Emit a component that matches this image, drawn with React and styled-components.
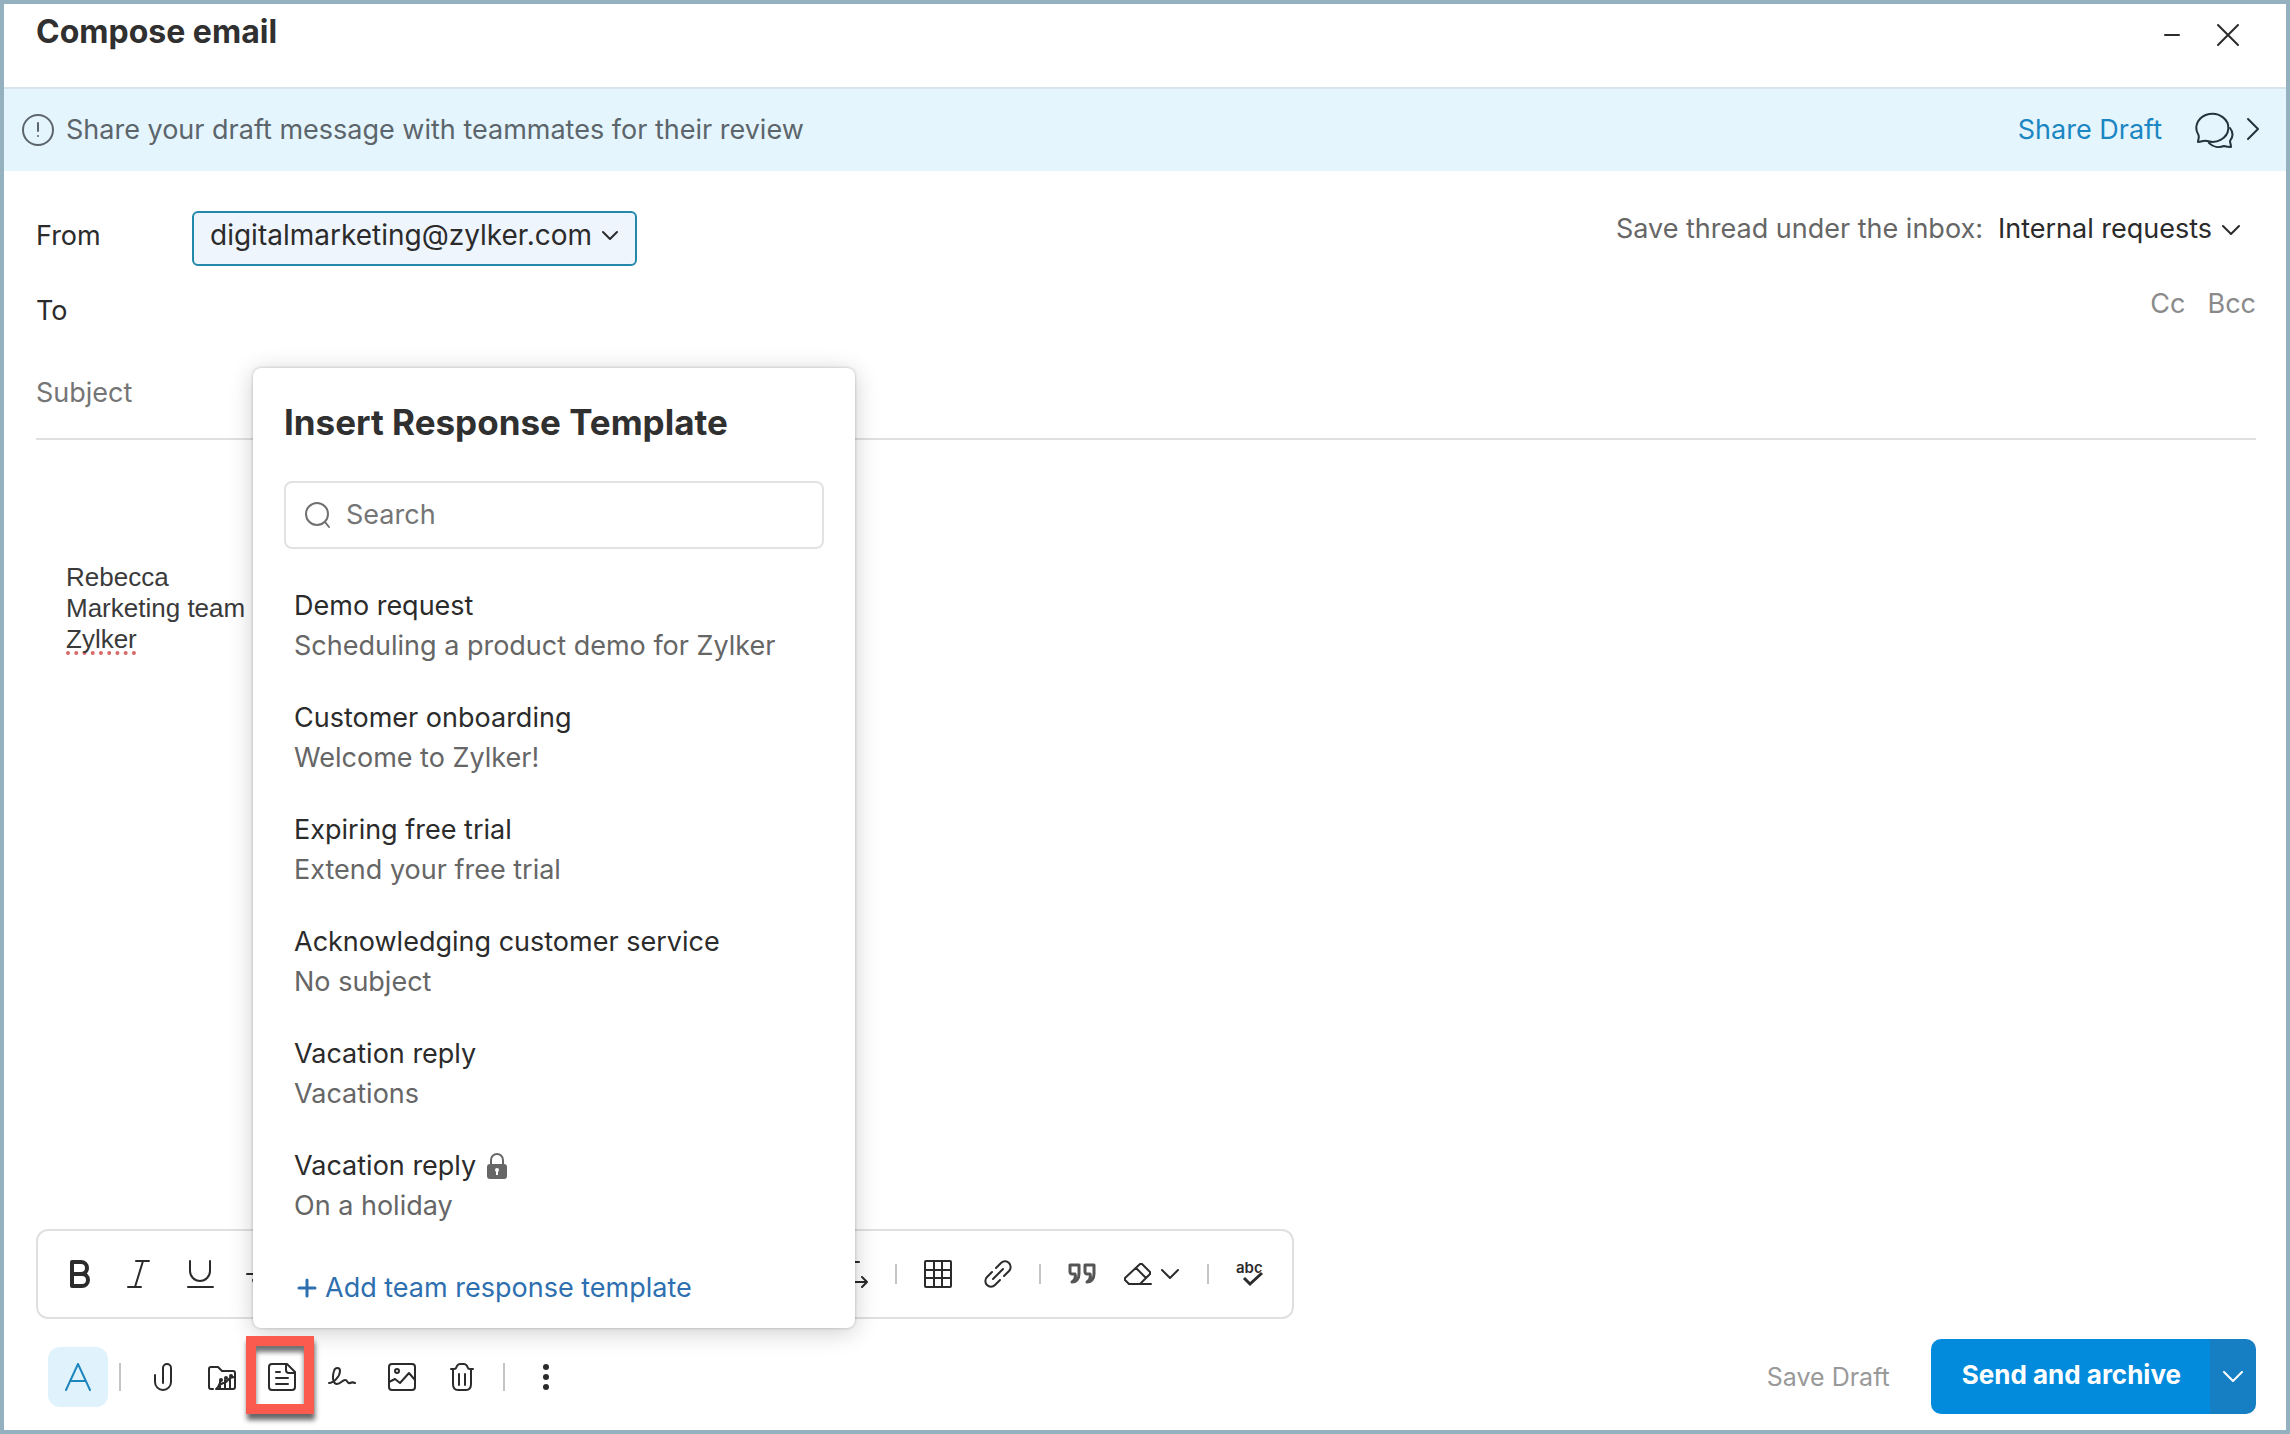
/**
 *
 * Compose email window
 *
 */

import React, { useState } from 'react';
import styled, { createGlobalStyle } from 'styled-components';

const GlobalStyle = createGlobalStyle`
  * {
    box-sizing: border-box;
  }
  body {
    margin: 0;
    background: #fff;
    color: #2b2b2b;
    font-family: Inter, "Liberation Sans", sans-serif;
    font-size: 27px;
    line-height: 36px;
  }
  button, input, select {
    margin: 0;
    padding: 0;
    border: 0;
    background: none;
    color: inherit;
    font: inherit;
  }
  button {
    cursor: pointer;
  }
  svg {
    display: block;
    flex: none;
  }
`;

const Window = styled.main`
  display: flex;
  flex-direction: column;
  min-height: 100vh;
  border: 4px solid #95b1bf;
`;

const Header = styled.header`
  display: flex;
  align-items: flex-start;
  justify-content: space-between;
  height: 85px;
  padding: 10px 44px 0 32px;
  border-bottom: 2px solid #d9e4ea;
`;

const Title = styled.h1`
  margin: 0;
  color: #303030;
  font-size: 32px;
  font-weight: 700;
  line-height: 36px;
`;

const WindowButtons = styled.div`
  display: flex;
  gap: 28px;
`;

const WindowButton = styled.button`
  display: flex;
  align-items: center;
  justify-content: center;
  width: 28px;
  height: 42px;
`;

const Banner = styled.section`
  display: flex;
  align-items: center;
  height: 82px;
  padding: 0 26px 0 18px;
  background: #e5f5fd;
  color: #5c656b;
`;

const BannerText = styled.p`
  flex: 1;
  margin: 0 12px;
`;

const ShareLink = styled.a`
  margin-right: 32px;
  color: #1a86c2;
  text-decoration: none;
`;

const ChatButton = styled.button`
  display: flex;
  align-items: center;
  gap: 12px;
  color: #23333b;
`;

const Form = styled.div`
  display: flex;
  flex-direction: column;
  padding: 40px 30px 0 32px;
`;

const FieldRow = styled.div`
  display: flex;
  align-items: center;
`;

const ToRow = styled(FieldRow)`
  height: 50px;
  margin-top: 20px;
`;

const FieldLabel = styled.label`
  width: 156px;
  padding-bottom: ${(props) => (props.$raised ? '6px' : '0')};
`;

const SelectBox = styled.span`
  display: flex;
  align-items: center;
  height: 55px;
  padding: 0 16px 7px 16px;
  border: 2px solid #2389ab;
  border-radius: 6px;
  background: #eff5fd;
  font-size: 28px;
`;

const Select = styled.select`
  appearance: none;
  outline: none;
  margin-right: ${(props) => props.$space || '8px'};
`;

const Aside = styled.div`
  display: flex;
  align-items: center;
  align-self: flex-start;
  gap: ${(props) => props.$gap};
  margin-left: auto;
  padding-right: ${(props) => props.$right || '0'};
`;

const AsideLabel = styled.label`
  color: #666;
`;

const InboxPicker = styled.span`
  display: flex;
  align-items: center;
`;

const CopyButton = styled.button`
  color: #8a8a8a;
`;

const ToInput = styled.input`
  flex: 1;
  outline: none;
`;

const SubjectInput = styled.input`
  height: 94px;
  margin-top: 10px;
  border-bottom: 2px solid #e0e0e0;
  outline: none;
  &::placeholder {
    color: #757575;
    opacity: 1;
  }
`;

const Editor = styled.div`
  flex: 1;
  padding: 122px 62px 40px;
  color: #3a3a3a;
  font-family: "Liberation Sans", Arial, sans-serif;
  font-size: 26px;
  line-height: 31px;
  outline: none;
`;

const Misspelled = styled.span`
  text-decoration: underline dotted #d9686a 4px;
  text-decoration-skip-ink: none;
  text-underline-offset: 3px;
`;

const FormatBar = styled.div`
  display: flex;
  align-items: center;
  justify-content: space-between;
  width: 1258px;
  max-width: calc(100% - 66px);
  height: 90px;
  margin-left: 32px;
  padding: 0 28px;
  border: 2px solid #e0e0e0;
  border-radius: 12px;
`;

const Tools = styled.div`
  display: flex;
  align-items: center;
`;

const Cluster = styled.div`
  display: flex;
  align-items: center;
  gap: ${(props) => props.$gap || '32px'};
`;

const Tool = styled.button`
  display: flex;
  align-items: center;
  justify-content: center;
  gap: 8px;
  min-width: 28px;
  height: 28px;
`;

const Divider = styled.span`
  width: 2px;
  height: ${(props) => (props.$tall ? '28px' : '20px')};
  margin: 0 27px 0 ${(props) => (props.$tight ? '11px' : '27px')};
  background: #c4c4c4;
`;

const Footer = styled.footer`
  display: flex;
  align-items: center;
  padding: 20px 30px 16px 44px;
`;

const FontToggle = styled.button`
  display: flex;
  align-items: center;
  justify-content: center;
  width: 60px;
  height: 60px;
  border-radius: 12px;
  background: #e0f3fd;
`;

const TemplateAnchor = styled.div`
  position: relative;
`;

const Highlight = styled.span`
  position: absolute;
  inset: -27px -18px -23px -22px;
  border: 10px solid #fb5b4e;
  box-shadow: 1px 6px 5px rgba(0, 0, 0, 0.6), inset 0 6px 5px rgba(0, 0, 0, 0.55);
  pointer-events: none;
`;

const Popup = styled.section`
  position: absolute;
  bottom: 63px;
  left: -15px;
  width: 602px;
  padding: 32px 31px 20px;
  border-radius: 8px;
  background: #fff;
  box-shadow: 0 0 3px rgba(0, 0, 0, 0.25), 0 4px 24px rgba(0, 0, 0, 0.2);
`;

const PopupTitle = styled.h2`
  margin: 0;
  color: #303030;
  font-size: 35px;
  font-weight: 700;
  line-height: 44px;
  white-space: nowrap;
`;

const SearchBox = styled.label`
  display: flex;
  align-items: center;
  gap: 14px;
  height: 68px;
  margin-top: 37px;
  padding: 0 18px;
  border: 2px solid #e2e2e2;
  border-radius: 8px;
  color: #707070;
`;

const SearchInput = styled.input`
  flex: 1;
  min-width: 0;
  outline: none;
  &::placeholder {
    color: #757575;
    opacity: 1;
  }
`;

const TemplateList = styled.ul`
  display: flex;
  flex-direction: column;
  gap: 32px;
  margin: 37px 0 0;
  padding: 0 10px;
  list-style: none;
`;

const TemplateButton = styled.button`
  display: block;
  width: 100%;
  line-height: 40px;
  text-align: left;
  white-space: nowrap;
`;

const TemplateName = styled.span`
  display: flex;
  align-items: center;
  gap: 11px;
`;

const TemplateSubject = styled.span`
  display: block;
  color: #666;
`;

const AddTemplate = styled.button`
  display: flex;
  align-items: center;
  gap: 8px;
  margin: 42px 0 0 13px;
  color: #2e6fb0;
  line-height: 40px;
  white-space: nowrap;
`;

const SaveDraft = styled.button`
  margin-left: auto;
  color: #999;
  font-size: 25px;
`;

const SplitButton = styled.div`
  display: flex;
  height: 75px;
  margin-left: 41px;
  border-radius: 10px;
  overflow: hidden;
  color: #fff;
`;

const SendButton = styled.button`
  padding: 0 29px 4px 31px;
  background: #028bdc;
  font-size: 26px;
  font-weight: 700;
`;

const SendMore = styled.button`
  display: flex;
  align-items: center;
  justify-content: center;
  width: 46px;
  background: #167ec2;
`;

const Icon = ({ w = 28, h = 28, sw = 2, children }) => (
  <svg
    width={w}
    height={h}
    viewBox={`0 0 ${w} ${h}`}
    fill="none"
    stroke="currentColor"
    strokeWidth={sw}
    strokeLinecap="round"
    strokeLinejoin="round"
    aria-hidden="true"
  >
    {children}
  </svg>
);

const Chevron = () => (
  <Icon w={20} h={12}>
    <path d="M2 2l8 8 8-8" />
  </Icon>
);

const formatTools = [
  {
    label: 'Bold',
    icon: (
      <Icon sw={4}>
        <path d="M6 2h9a6 6 0 0 1 0 12H6zM6 14h10a6 6 0 0 1 0 12H6z" />
      </Icon>
    ),
  },
  {
    label: 'Italic',
    icon: (
      <Icon>
        <path d="M10 1h13M2 27h13M17 1l-8 26" />
      </Icon>
    ),
  },
  {
    label: 'Underline',
    icon: (
      <Icon>
        <path d="M4 1v10a10 10 0 0 0 20 0V1M2 27h25" />
      </Icon>
    ),
  },
  {
    label: 'Strikethrough',
    icon: (
      <Icon>
        <path d="M1 14h26M20 6c-2-6-12-5-12 1 0 3 2 5 6 7 4 1 7 3 7 6 0 7-13 8-14 0" />
      </Icon>
    ),
  },
];

const templates = [
  { name: 'Demo request', subject: 'Scheduling a product demo for Zylker' },
  { name: 'Customer onboarding', subject: 'Welcome to Zylker!' },
  { name: 'Expiring free trial', subject: 'Extend your free trial' },
  { name: 'Acknowledging customer service', subject: 'No subject' },
  { name: 'Vacation reply', subject: 'Vacations' },
  { name: 'Vacation reply', subject: 'On a holiday', locked: true },
];

const LockIcon = () => (
  <svg width="20" height="26" viewBox="0 0 20 26" aria-label="Private">
    <path d="M4 13V7a6 6 0 0 1 12 0v6" fill="none" stroke="#666" strokeWidth="2" />
    <rect y="11" width="20" height="15" rx="3" fill="#666" />
    <circle cx="10" cy="17" r="2" fill="#fff" />
    <path d="M9 17h2v5H9z" fill="#fff" />
  </svg>
);

const TemplatePopup = () => {
  const [query, setQuery] = useState('');
  const shown = templates.filter((t) => t.name.toLowerCase().includes(query.toLowerCase()));

  return (
    <Popup aria-label="Insert Response Template">
      <PopupTitle>Insert Response Template</PopupTitle>
      <SearchBox>
        <Icon w={28} h={28}>
          <circle cx="13" cy="13" r="11" />
          <path d="M21 21l4 5" />
        </Icon>
        <SearchInput
          placeholder="Search"
          aria-label="Search"
          value={query}
          onChange={(e) => setQuery(e.target.value)}
        />
      </SearchBox>
      <TemplateList>
        {shown.map((t) => (
          <li key={t.subject}>
            <TemplateButton>
              <TemplateName>
                {t.name}
                {t.locked && <LockIcon />}
              </TemplateName>
              <TemplateSubject>{t.subject}</TemplateSubject>
            </TemplateButton>
          </li>
        ))}
      </TemplateList>
      <AddTemplate>
        <Icon w={20} h={20} sw={3}>
          <path d="M10 2v16M2 10h16" />
        </Icon>
        Add team response template
      </AddTemplate>
    </Popup>
  );
};

const App = () => {
  const [popupOpen, setPopupOpen] = useState(true);

  return (
    <>
      <GlobalStyle />
      <Window>
        <Header>
          <Title>Compose email</Title>
          <WindowButtons>
            <WindowButton aria-label="Minimize">
              <Icon w={20} h={20}>
                <path d="M3 10h14" />
              </Icon>
            </WindowButton>
            <WindowButton aria-label="Close">
              <Icon w={24} h={24}>
                <path d="M2 2l20 20M22 2L2 22" />
              </Icon>
            </WindowButton>
          </WindowButtons>
        </Header>

        <Banner>
          <Icon w={32} h={32}>
            <circle cx="16" cy="16" r="15" />
            <path d="M16 9v8M16 22v0" />
          </Icon>
          <BannerText>Share your draft message with teammates for their review</BannerText>
          <ShareLink href="#share">Share Draft</ShareLink>
          <ChatButton aria-label="Open comments">
            <Icon w={40} h={38}>
              <path d="M4 31c0-3 2-5 0-8A16 14 0 1 1 13 30c-4-1-5 1-9 1z" />
              <path d="M36 17c4 5 3 9 0 13 0 2 1 3 1 6-3 0-4 0-7-1-5 2-11 1-15-3" />
            </Icon>
            <Icon w={14} h={26}>
              <path d="M2 2l10 10L2 22" />
            </Icon>
          </ChatButton>
        </Banner>

        <Form>
          <FieldRow>
            <FieldLabel htmlFor="from" $raised>
              From
            </FieldLabel>
            <SelectBox>
              <Select id="from">
                <option>digitalmarketing@zylker.com</option>
              </Select>
              <Icon w={18} h={12}>
                <path d="M2 3l7 7 7-7" />
              </Icon>
            </SelectBox>
            <Aside $gap="15px" $right="15px">
              <AsideLabel htmlFor="inbox">Save thread under the inbox:</AsideLabel>
              <InboxPicker>
                <Select id="inbox">
                  <option>Internal requests</option>
                </Select>
                <Icon w={20} h={12}>
                  <path d="M2 3l8 8 8-8" />
                </Icon>
              </InboxPicker>
            </Aside>
          </FieldRow>
          <ToRow>
            <FieldLabel htmlFor="to">To</FieldLabel>
            <ToInput id="to" />
            <Aside $gap="22px">
              <CopyButton>Cc</CopyButton>
              <CopyButton>Bcc</CopyButton>
            </Aside>
          </ToRow>
          <SubjectInput placeholder="Subject" aria-label="Subject" />
        </Form>

        <Editor
          contentEditable
          suppressContentEditableWarning
          spellCheck={false}
          role="textbox"
          aria-label="Message body"
        >
          <div>Rebecca</div>
          <div>Marketing team</div>
          <div>
            <Misspelled>Zylker</Misspelled>
          </div>
        </Editor>

        <FormatBar role="toolbar" aria-label="Formatting">
          <Cluster>
            {formatTools.map((t) => (
              <Tool key={t.label} aria-label={t.label}>
                {t.icon}
              </Tool>
            ))}
          </Cluster>
          <Tools>
            <Tool aria-label="Text direction">
              <Icon>
                <path d="M6 2h13M12 2v12M2 22h25M22 17l5 5-5 5" />
              </Icon>
            </Tool>
            <Divider />
            <Cluster>
              <Tool aria-label="Insert table">
                <Icon>
                  <rect x="1" y="1" width="26" height="26" rx="1" />
                  <path d="M10 1v26M18 1v26M1 10h26M1 18h26" />
                </Icon>
              </Tool>
              <Tool aria-label="Insert link">
                <Icon>
                  <path d="M9 19L19 9" />
                  <path d="M12 8l5-5a5.600 5.600 0 0 1 8 8l-5 5M8 12l-5 5a5.600 5.600 0 0 0 8 8l5-5" />
                </Icon>
              </Tool>
            </Cluster>
            <Divider />
            <Cluster $gap="28px">
              <Tool aria-label="Quote">
                <Icon sw={3}>
                  <g stroke="#555">
                    <path d="M2 5h9v9c0 5-3 8-7 8 3-2 4-5 3-8H4c-1 0-2-1-2-2V5z" />
                    <path d="M17 5h9v9c0 5-3 8-7 8 3-2 4-5 3-8h-3c-1 0-2-1-2-2V5z" />
                  </g>
                </Icon>
              </Tool>
              <Tool aria-label="Clear formatting">
                <Icon>
                  <path d="M27 24H5l-4-4v-2L16 4h2l8 8v2L16 24M12 8l10 10" />
                </Icon>
                <Chevron />
              </Tool>
            </Cluster>
            <Divider />
            <Tool aria-label="Check spelling">
              <svg width="28" height="36" viewBox="0 -4 28 36" aria-hidden="true">
                <text x="0" y="13" fontFamily="Inter, sans-serif" fontSize="15" fontWeight="600" fill="#2b2b2b">
                  abc
                </text>
                <path d="M12 19l4 4 12-12" fill="none" stroke="#fff" strokeWidth="4" />
                <path d="M8 18l6 6 12-11" fill="none" stroke="#2b2b2b" strokeWidth="3" />
              </svg>
            </Tool>
          </Tools>
        </FormatBar>

        <Footer>
          <FontToggle aria-label="Text formatting">
            <Icon>
              <path d="M2 27L14 1l12 26M6 18h16" stroke="#1f86bd" />
            </Icon>
          </FontToggle>
          <Divider $tall $tight />
          <Cluster>
            <Tool aria-label="Attach file">
              <Icon>
                <path d="M7 12v7a8 8 0 0 0 16 0V5a4 4 0 0 0-8 0v15" />
              </Icon>
            </Tool>
            <Tool aria-label="Attach from WorkDrive">
              <Icon>
                <path d="M5 26H3a2 2 0 0 1-2-2V6a2 2 0 0 1 2-2h7l4 4h11a2 2 0 0 1 2 2v14a2 2 0 0 1-2 2H8" />
                <path d="M9 26l3-6M12 26v-8M17 26v-9M22 26V15M9 25l4-4 5-2 4-4 4-1" />
                <g fill="currentColor" stroke="none">
                  <circle cx="13" cy="17" r="2" />
                  <circle cx="18" cy="15" r="2" />
                  <circle cx="23" cy="13" r="2" />
                </g>
              </Icon>
            </Tool>
            <TemplateAnchor>
              <Tool aria-label="Insert response template" onClick={() => setPopupOpen(!popupOpen)}>
                <Icon>
                  <path d="M4 1h15l8 8v15a3 3 0 0 1-3 3H4a3 3 0 0 1-3-3V4a3 3 0 0 1 3-3z" />
                  <path d="M18 1v6a3 3 0 0 0 3 3h6M8 9h4M8 15h12M8 21h12" />
                </Icon>
              </Tool>
              {popupOpen && <TemplatePopup />}
              <Highlight />
            </TemplateAnchor>
            <Tool aria-label="Signature">
              <Icon>
                <path d="M1 20c5 0 11-7 11-12 0-4-5-4-6 0-2 6-1 13 3 13 4 0 5-4 8-4 3 0 2 4 5 3 2-1 3-1 5 0" />
              </Icon>
            </Tool>
            <Tool aria-label="Insert image">
              <Icon>
                <rect x="1" y="1" width="26" height="26" rx="3" />
                <circle cx="9" cy="8" r="2" />
                <path d="M1 19l6-3 5 4 9-10 6 7" />
              </Icon>
            </Tool>
            <Tool aria-label="Discard">
              <Icon>
                <path d="M3 6h3c3 0 2-2 3-3s1-2 3-2h4c2 0 2 1 3 2s0 3 3 3h3M5 6v15c0 4 2 6 5 6h8c3 0 5-2 5-6V6M11 11v11M17 11v11" />
              </Icon>
            </Tool>
          </Cluster>
          <Divider $tall />
          <Tool aria-label="More options">
            <Icon>
              <g fill="currentColor" stroke="none">
                <circle cx="14" cy="4" r="3" />
                <circle cx="14" cy="14" r="3" />
                <circle cx="14" cy="24" r="3" />
              </g>
            </Icon>
          </Tool>
          <SaveDraft>Save Draft</SaveDraft>
          <SplitButton>
            <SendButton>Send and archive</SendButton>
            <SendMore aria-label="More send options">
              <Icon w={20} h={12}>
                <path d="M1 1l9 9 9-9" />
              </Icon>
            </SendMore>
          </SplitButton>
        </Footer>
      </Window>
    </>
  );
};

export default App;
